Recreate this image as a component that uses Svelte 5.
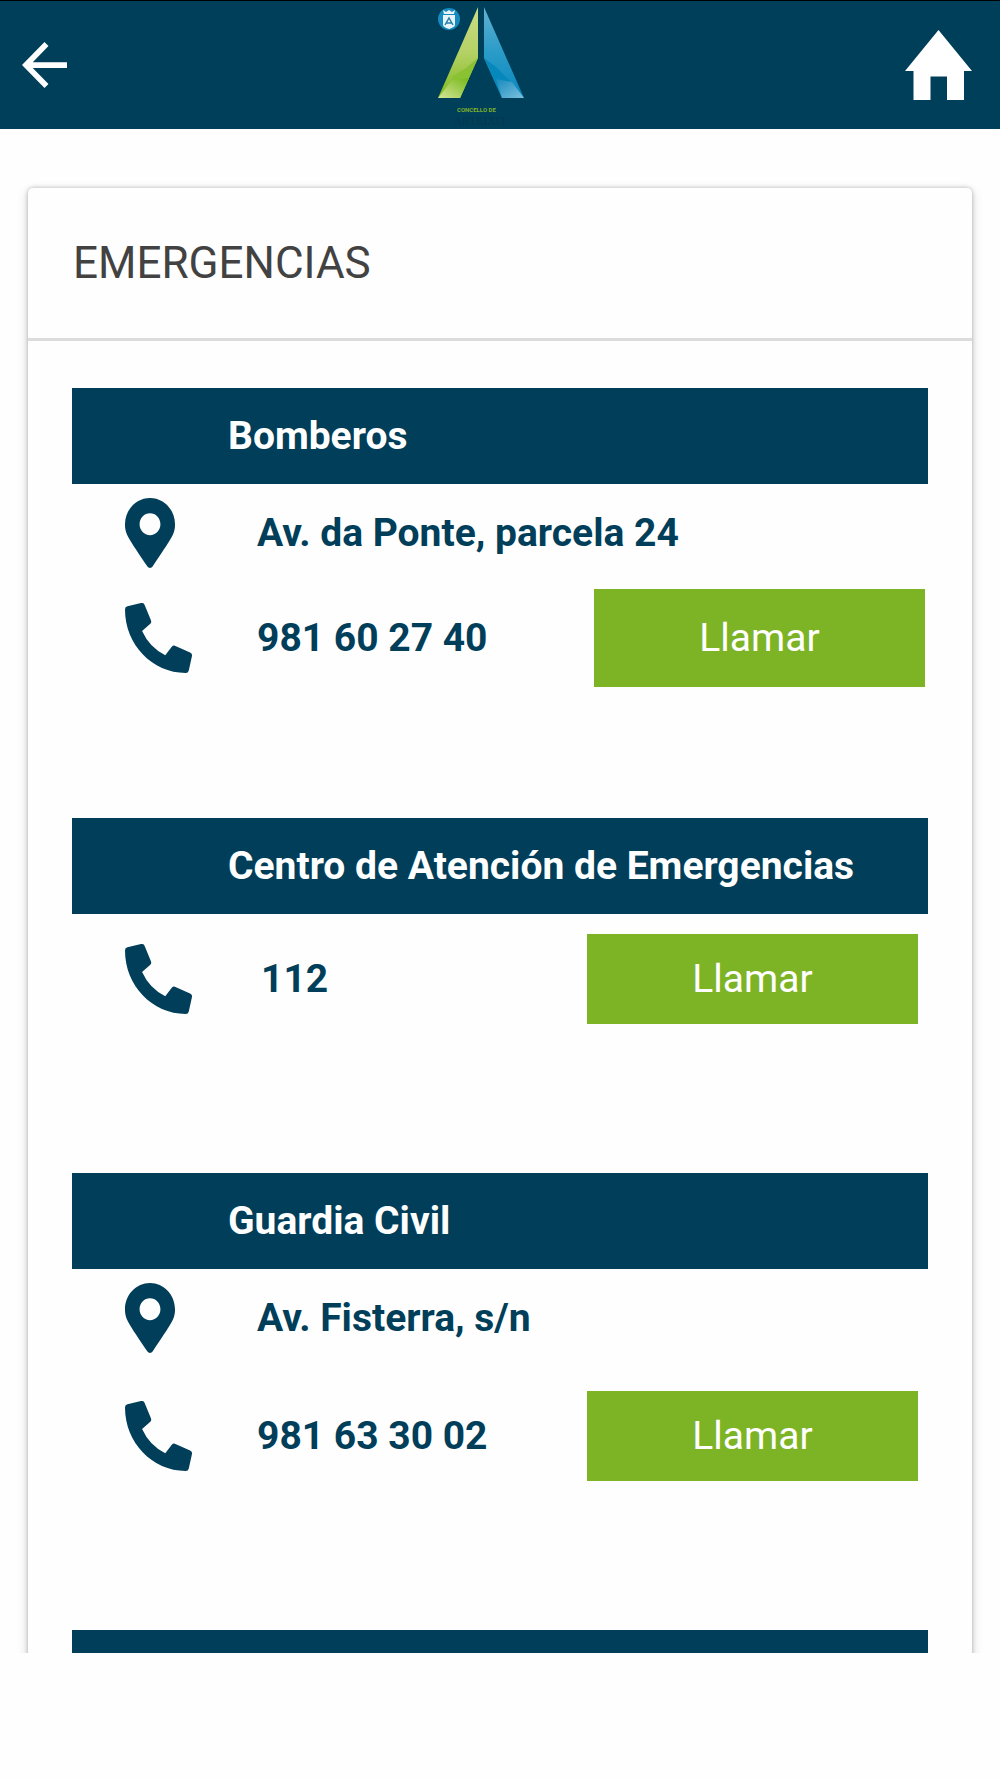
<script lang="ts">
	interface Contact {
		name: string;
		address?: string;
		phone?: string;
		tall?: boolean;
	}

	const contacts: Contact[] = [
		{ name: 'Bomberos', address: 'Av. da Ponte, parcela 24', phone: '981 60 27 40', tall: true },
		{ name: 'Centro de Atención de Emergencias', phone: '112' },
		{ name: 'Guardia Civil', address: 'Av. Fisterra, s/n', phone: '981 63 30 02' },
		{ name: '' }
	];

	function call(phone: string) {
		window.location.href = `tel:${phone.replaceAll(' ', '')}`;
	}
</script>

<div class="app">
	<header class="topbar">
		<a href="#back" class="back" aria-label="Volver">
			<svg viewBox="4 4 16 16" preserveAspectRatio="none">
				<path d="M20 11H7.83l5.59-5.59L12 4l-8 8 8 8 1.41-1.41L7.83 13H20v-2z" />
			</svg>
		</a>

		<svg class="logo" viewBox="430 0 112 128">
			<defs>
				<linearGradient id="green" x1="0" y1="0" x2="0" y2="1">
					<stop offset="0" stop-color="#cbdc86" />
					<stop offset="0.5" stop-color="#b4d165" />
					<stop offset="1" stop-color="#80ba20" />
				</linearGradient>
				<linearGradient id="green-foot" x1="0" y1="1" x2="1" y2="0">
					<stop offset="0" stop-color="#d3e59a" />
					<stop offset="1" stop-color="#76b816" />
				</linearGradient>
				<linearGradient id="blue" x1="0" y1="0" x2="0" y2="1">
					<stop offset="0" stop-color="#62b1d2" />
					<stop offset="0.5" stop-color="#2a9bc8" />
					<stop offset="1" stop-color="#0787bd" />
				</linearGradient>
				<linearGradient id="blue-foot" x1="0" y1="0" x2="1" y2="1">
					<stop offset="0" stop-color="#168abd" />
					<stop offset="1" stop-color="#7cc0dd" />
				</linearGradient>
			</defs>
			<path fill="url(#green)" d="M478 6v51l-18 40h-22z" />
			<path fill="#8ac233" d="M478 57l-18 40h-16l9-22 13-8z" />
			<path fill="url(#green-foot)" d="M438 97l14-18 17-2-9 20z" />
			<path fill="url(#blue)" d="M484 6l40 91h-22l-18-40z" />
			<path fill="#0788bd" d="M484 57l12 9 14 14 13 17h-21z" />
			<path fill="url(#blue-foot)" d="M496 78l16 3 12 16h-22z" />
			<circle cx="449" cy="18" r="11" fill="#168bbd" />
			<path fill="#e8f4fa" d="M443 9l3 2 3-2 3 2 3-2-1 4h-10zM443 14h12v10q0 2-6 4-6-2-6-4z" />
			<path fill="none" stroke="#2480a8" stroke-width="1.5" d="M445 24l4-7 4 7M446 22h6" />
			<text class="logo-small" x="457" y="111">CONCELLO DE</text>
			<text class="logo-name" x="453" y="124">ARTEIXO</text>
		</svg>

		<a href="#home" class="home" aria-label="Inicio">
			<svg viewBox="0 0 67 70">
				<path d="M33.500 0L67 41H59V70H42V46.500H25.500V70H8.500V41H0z" />
			</svg>
		</a>
	</header>

	<main class="content">
		<div class="card">
			<h1>EMERGENCIAS</h1>
			<div class="list">
				{#each contacts as contact}
					<section class="contact" class:tall={contact.tall}>
						<h2>{contact.name}</h2>
						{#if contact.address}
							<div class="row address">
								<svg class="icon pin" viewBox="0 0 384 512" preserveAspectRatio="none">
									<path
										d="M172.268 501.67C26.97 291.031 0 269.413 0 192 0 85.961 85.961 0 192 0s192 85.961 192 192c0 77.413-26.97 99.031-172.268 309.67-9.535 13.774-29.93 13.773-39.464 0zM192 272c44.183 0 80-35.817 80-80s-35.817-80-80-80-80 35.817-80 80 35.817 80 80 80z"
									/>
								</svg>
								<span>{contact.address}</span>
							</div>
						{/if}
						{#if contact.phone}
							<div class="row phone" class:short={contact.phone.length === 3}>
								<svg class="icon handset" viewBox="0 0 512 512" preserveAspectRatio="none">
									<path
										d="M497.39 361.8l-112-48a24 24 0 0 0-28 6.9l-49.6 60.6A370.66 370.66 0 0 1 130.6 204.11l60.6-49.6a23.94 23.94 0 0 0 6.9-28l-48-112A24.16 24.16 0 0 0 122.6.61l-104 24A24 24 0 0 0 0 48c0 256.5 207.9 464 464 464a24 24 0 0 0 23.4-18.6l24-104a24.29 24.29 0 0 0-14.01-27.6z"
									/>
								</svg>
								<span>{contact.phone}</span>
								<button type="button" onclick={() => call(contact.phone ?? '')}>Llamar</button>
							</div>
						{/if}
					</section>
				{/each}
			</div>
		</div>
	</main>
</div>

<style>
	:global(body) {
		margin: 0;
		background: #fefefe;
	}

	.app {
		box-sizing: border-box;
		display: flex;
		flex-direction: column;
		height: 100vh;
		padding-bottom: 125px;
		font-family: Roboto, sans-serif;
		color: #003e5a;
	}

	.topbar {
		display: flex;
		flex: none;
		align-items: center;
		justify-content: space-between;
		padding: 0 28px 0 22px;
		border-top: 1px solid #000;
		background: #003f59;
	}

	.topbar svg {
		display: block;
	}

	.back svg {
		width: 45px;
		height: 46px;
		fill: #fff;
	}

	.home svg {
		width: 67px;
		height: 70px;
		fill: #fff;
	}

	.logo {
		width: 112px;
		height: 128px;
	}

	.logo-small {
		font-size: 6px;
		font-weight: 700;
		fill: #7fae2a;
	}

	.logo-name {
		font-family: 'Liberation Serif', serif;
		font-size: 12px;
		fill: #00374f;
	}

	.content {
		flex: 1;
		min-height: 0;
		overflow: hidden;
	}

	.card {
		margin: 59px 28px 0;
		border-radius: 5px;
		background: #fefefe;
		box-shadow:
			0 0 4px rgba(0, 0, 0, 0.26),
			0 4px 12px rgba(0, 0, 0, 0.16);
	}

	h1 {
		margin: 0;
		padding: 48px 45px 47px;
		border-bottom: 3px solid #dcdcdc;
		font-size: 44px;
		font-weight: 400;
		line-height: 55px;
		color: #424242;
	}

	.list {
		padding: 47px 44px 0;
	}

	.contact {
		padding-bottom: 149px;
	}

	.contact.tall {
		padding-bottom: 131px;
	}

	h2 {
		height: 96px;
		margin: 0;
		padding-left: 156px;
		background: #003e5a;
		font-size: 39px;
		font-weight: 700;
		line-height: 96px;
		color: #fff;
	}

	.row {
		display: grid;
		grid-template-columns: 132px 1fr auto;
		align-items: center;
		padding: 0 10px 0 53px;
		font-size: 39px;
		font-weight: 700;
	}

	.address {
		height: 98px;
	}

	.phone {
		padding-top: 20px;
	}

	.address + .phone {
		padding-top: 24px;
	}

	.tall .address + .phone {
		padding-top: 7px;
		padding-right: 3px;
	}

	.short span {
		padding-left: 4px;
	}

	.icon {
		height: 70px;
		fill: #003e5a;
	}

	.pin {
		width: 50px;
	}

	.handset {
		width: 67px;
	}

	button {
		width: 331px;
		height: 90px;
		padding: 0;
		border: 0;
		background: #7db426;
		font: 400 39px Roboto, sans-serif;
		color: #fff;
	}

	.tall button {
		height: 98px;
	}
</style>
